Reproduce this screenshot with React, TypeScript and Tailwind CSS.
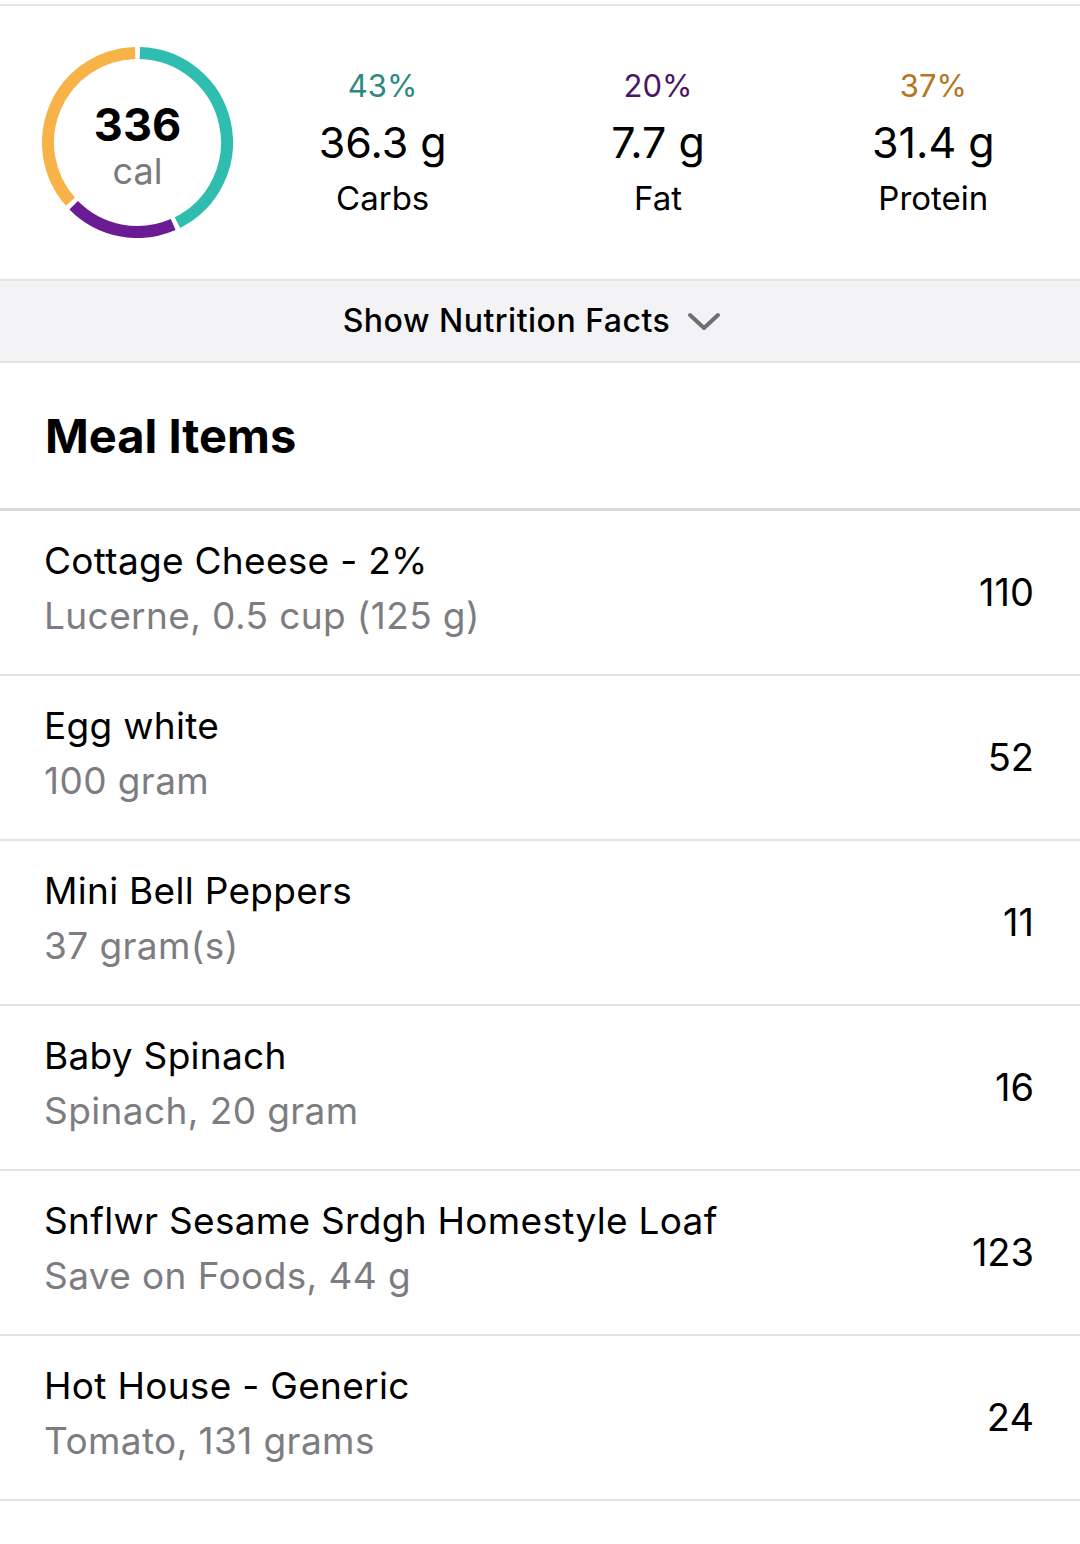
import React from "react";

const items = [
  { name: "Cottage Cheese - 2%", detail: "Lucerne, 0.5 cup (125 g)", cal: 110 },
  { name: "Egg white", detail: "100 gram", cal: 52 },
  { name: "Mini Bell Peppers", detail: "37 gram(s)", cal: 11 },
  { name: "Baby Spinach", detail: "Spinach, 20 gram", cal: 16 },
  { name: "Snflwr Sesame Srdgh Homestyle Loaf", detail: "Save on Foods, 44 g", cal: 123 },
  { name: "Hot House - Generic", detail: "Tomato, 131 grams", cal: 24 },
];

const macros = [
  { pct: "43%", grams: "36.3 g", label: "Carbs", color: "text-[#2c8a82]" },
  { pct: "20%", grams: "7.7 g", label: "Fat", color: "text-[#4b1669]" },
  { pct: "37%", grams: "31.4 g", label: "Protein", color: "text-[#b5761f]" },
];

// arc from a to b degrees, clockwise from 12 o'clock
function arc(cx: number, cy: number, r: number, a: number, b: number) {
  const p = (deg: number) => {
    const rad = ((deg - 90) * Math.PI) / 180;
    return [cx + r * Math.cos(rad), cy + r * Math.sin(rad)];
  };
  const [x1, y1] = p(a);
  const [x2, y2] = p(b);
  const large = b - a > 180 ? 1 : 0;
  return `M ${x1} ${y1} A ${r} ${r} 0 ${large} 1 ${x2} ${y2}`;
}

function CalorieRing() {
  const c = 95.5;
  const r = 89.5;
  return (
    <div className="relative w-[191px] h-[191px] shrink-0">
      <svg width="191" height="191" viewBox="0 0 191 191">
        <path d={arc(c, c, r, 1.5, 153.5)} stroke="#2fbdb0" strokeWidth="12" fill="none" />
        <path d={arc(c, c, r, 156.5, 225.5)} stroke="#6b1c95" strokeWidth="12" fill="none" />
        <path d={arc(c, c, r, 228.5, 358.5)} stroke="#f8b348" strokeWidth="12" fill="none" />
      </svg>
      <div className="absolute inset-0 flex flex-col items-center justify-center pt-[8px]">
        <span className="text-[45px] leading-[48px] font-bold text-black">336</span>
        <span className="text-[36px] leading-[44px] text-[#7a7a7e]">cal</span>
      </div>
    </div>
  );
}

export default function App() {
  return (
    <div className="w-[1080px] min-h-[1544px] bg-white font-['Inter',sans-serif] text-black">
      <div className="h-[4px]" />
      <div className="h-[2px] bg-[#e6e6e9]" />

      {/* Summary */}
      <section className="flex items-center h-[273px] pl-[42px] pr-[9px]">
        <CalorieRing />
        <div className="flex-1 grid grid-cols-3 ml-[12px]">
          {macros.map((m) => (
            <div key={m.label} className="flex flex-col items-center">
              <span className={`text-[31px] leading-[38px] ${m.color}`}>{m.pct}</span>
              <span className="text-[43px] leading-[54px] mt-[10px]">{m.grams}</span>
              <span className="text-[33px] leading-[40px] mt-[9px]">{m.label}</span>
            </div>
          ))}
        </div>
      </section>

      {/* Nutrition facts toggle */}
      <div className="h-[84px] bg-[#f3f3f6] border-y-2 border-[#e4e4e7] flex items-center justify-center pr-[16px]">
        <span className="text-[32px] font-medium tracking-[0.5px]">Show Nutrition Facts</span>
        <svg width="34" height="22" viewBox="0 0 34 22" className="ml-[17px] mt-[2px]">
          <path d="M3 4 L17 17 L31 4" stroke="#6e6e73" strokeWidth="4" fill="none" strokeLinecap="round" strokeLinejoin="round" />
        </svg>
      </div>

      {/* Meal items */}
      <div className="h-[145px] flex items-center px-[45px]">
        <h2 className="text-[47px] font-bold mt-[2px]">Meal Items</h2>
      </div>
      <div className="h-[3px] bg-[#d9d9dc]" />

      {items.map((item) => (
        <div key={item.name} className="flex h-[165px] border-b-2 border-[#e3e3e6] pl-[44px] pr-[46px]">
          <div className="flex-1 flex flex-col pt-[28px]">
            <span className="text-[37px] leading-[44px] tracking-[0.3px]">{item.name}</span>
            <span className="text-[37px] leading-[44px] tracking-[0.4px] mt-[11px] text-[#7d7d81]">{item.detail}</span>
          </div>
          <div className="flex items-center">
            <span className="text-[38px]">{item.cal}</span>
          </div>
        </div>
      ))}
    </div>
  );
}
